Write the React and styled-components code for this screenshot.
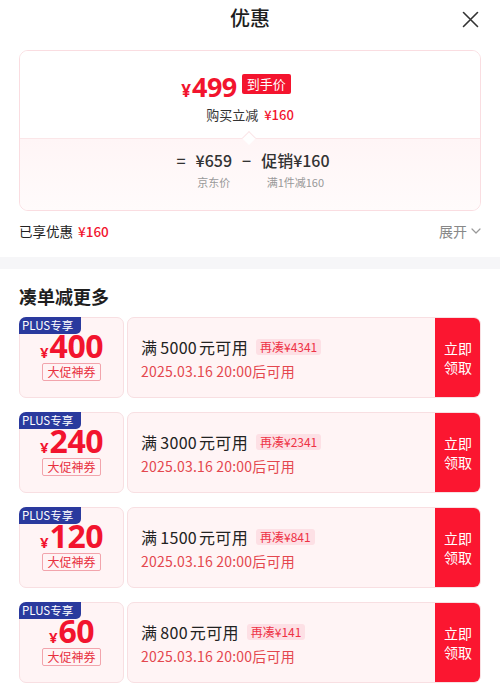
import React from "react";
import styled, { createGlobalStyle } from "styled-components";

const Global = createGlobalStyle`
  html, body { margin: 0; padding: 0; background: #fff; }
  body { font-family: "Noto Sans CJK SC", "Noto Sans", sans-serif; color: #222; }
  * { box-sizing: border-box; }
`;

const Page = styled.div`
  width: 500px;
  min-height: 698px;
  background: #fff;
`;

const Header = styled.div`
  height: 38px;
  display: flex;
  align-items: center;
  justify-content: center;
  position: relative;
`;

const Title = styled.div`
  font-size: 20px;
  font-weight: 500;
  color: #1e1e1e;
  line-height: 1;
  margin-top: -2px;
`;

const Close = styled.button`
  position: absolute;
  right: 20px;
  top: 9px;
  width: 20px;
  height: 20px;
  border: 0;
  padding: 0;
  background: transparent;
  display: flex;
  align-items: center;
  justify-content: center;
`;

const Card = styled.div`
  margin: 12px 19px 0;
  border: 1px solid #fadde1;
  border-radius: 9px;
  overflow: hidden;
`;

const CardTop = styled.div`
  height: 88px;
  padding-top: 20px;
  display: flex;
  flex-direction: column;
  align-items: center;
  position: relative;
  background: #fff;
  border-bottom: 1px solid #fbe6e8;
  &::after {
    content: "";
    position: absolute;
    left: 224px;
    bottom: -5px;
    width: 9px;
    height: 9px;
    background: #fff;
    border-left: 1px solid #fbe6e8;
    border-top: 1px solid #fbe6e8;
    transform: rotate(45deg);
  }
`;

const PriceRow = styled.div`
  display: flex;
  align-items: center;
  height: 30px;
  gap: 5px;
  margin-right: 28px;
`;

const BigPrice = styled.div`
  color: #f2142e;
  font-weight: 700;
  display: flex;
  align-items: baseline;
  line-height: 1;
  font-family: "Open Sans", "Noto Sans CJK SC", sans-serif;
`;

const Yen = styled.span`
  font-size: ${p => p.$size || 16}px;
  line-height: ${p => p.$size || 16}px;
  font-weight: 700;
  margin-right: 1px;
`;

const Digits = styled.span`
  font-size: ${p => p.$size || 29}px;
  line-height: ${p => p.$lh || p.$size || 29}px;
  letter-spacing: -0.5px;
`;

const Badge = styled.span`
  background: #f4142e;
  color: #fff;
  font-size: 13px;
  line-height: 20px;
  height: 20px;
  padding: 0 5px;
  border-radius: 2px;
  margin-top: -4px;
`;

const SubLine = styled.div`
  margin-top: 4px;
  font-size: 13px;
  color: #333;
  line-height: 20px;
  display: flex;
  gap: 6px;
`;

const RedText = styled.span`
  color: #f2142e;
  font-weight: ${p => (p.$bold ? 500 : 400)};
`;

const CardBottom = styled.div`
  height: 71px;
  padding-top: 10px;
  background: linear-gradient(180deg, #fff5f6 0%, #fffbfb 100%);
  display: flex;
  justify-content: center;
  gap: 10px;
  padding-left: 6px;
`;

const Formula = styled.div`
  display: flex;
  flex-direction: column;
  align-items: center;
`;

const FVal = styled.div`
  font-size: 16px;
  line-height: 22px;
  color: #333;
  font-weight: 500;
  white-space: nowrap;
`;

const FLabel = styled.div`
  font-size: 11px;
  line-height: 16px;
  color: #999;
  margin-top: 3px;
  white-space: nowrap;
`;

const EnjoyRow = styled.div`
  display: flex;
  justify-content: space-between;
  align-items: center;
  height: 24px;
  margin: 8px 19px 0;
  font-size: 13.5px;
`;

const EnjoyLeft = styled.div`
  color: #222;
  display: flex;
  gap: 5px;
`;

const Expand = styled.div`
  color: #888;
  font-size: 14px;
  display: flex;
  align-items: center;
  gap: 4px;
`;

const Band = styled.div`
  height: 12px;
  background: #f6f6f8;
  margin-top: 14px;
`;

const Section = styled.div`
  padding: 15px 19px 0;
`;

const SectionTitle = styled.div`
  font-size: 18px;
  font-weight: 700;
  color: #1e1e1e;
  line-height: 24px;
`;

const List = styled.div`
  margin-top: 9px;
  display: flex;
  flex-direction: column;
  gap: 14px;
`;

const Coupon = styled.div`
  display: flex;
  height: 81px;
  gap: 3px;
`;

const Stub = styled.div`
  width: 105px;
  flex: none;
  position: relative;
  background: #fff4f5;
  border: 1px solid #f8dfe2;
  border-radius: 7px;
  display: flex;
  flex-direction: column;
  align-items: center;
  padding-top: 16px;
`;

const Plus = styled.div`
  position: absolute;
  left: -1px;
  top: -1px;
  width: 62px;
  height: 17px;
  background: #2a3a9e;
  color: #fff;
  font-size: 11.5px;
  line-height: 17px;
  padding-left: 3px;
  border-radius: 7px 0 5px 0;
  white-space: nowrap;
`;

const StubPrice = styled.div`
  color: #f2142e;
  font-weight: 700;
  display: flex;
  align-items: baseline;
  height: 28px;
  font-family: "Noto Sans", "Noto Sans CJK SC", sans-serif;
`;

const StubTag = styled.div`
  margin-top: 1px;
  border: 1px solid #f2a4ac;
  border-radius: 2px;
  color: #e8303f;
  font-size: 12px;
  line-height: 16px;
  padding: 0 4px;
`;

const Main = styled.div`
  flex: 1;
  background: #fff4f5;
  border: 1px solid #f8dfe2;
  border-radius: 7px;
  display: flex;
  overflow: hidden;
`;

const Info = styled.div`
  flex: 1;
  padding: 17px 0 0 13px;
`;

const CondRow = styled.div`
  display: flex;
  align-items: center;
  height: 24px;
`;

const Cond = styled.span`
  font-size: 16px;
  color: #222;
  letter-spacing: 0.3px;
`;

const Gap = styled.span`
  margin-left: ${p => p.$w}px;
`;

const More = styled.span`
  margin-left: 8px;
  background: #fde0e5;
  color: #ee3245;
  font-size: 12px;
  line-height: 16px;
  padding: 0 4px;
  border-radius: 3px;
`;

const DateLine = styled.div`
  margin-top: 2px;
  font-size: 14px;
  color: #e4474e;
  line-height: 20px;
  letter-spacing: 0.2px;
`;

const Grab = styled.button`
  width: 46px;
  flex: none;
  border: 0;
  margin: -1px -1px -1px 0;
  background: #fb1630;
  color: #fff;
  font-family: inherit;
  font-size: 14px;
  line-height: 19px;
  padding: 0;
  display: flex;
  align-items: center;
  justify-content: center;
  text-align: center;
`;

const coupons = [
  { amt: "400", need: "5000", more: "4341" },
  { amt: "240", need: "3000", more: "2341" },
  { amt: "120", need: "1500", more: "841" },
  { amt: "60", need: "800", more: "141" },
];

export default function App() {
  return (
    <Page>
      <Global />
      <Header>
        <Title>优惠</Title>
        <Close aria-label="关闭">
          <svg width="17" height="17" viewBox="0 0 17 17">
            <path d="M1.5 1.5 L15.5 15.5 M15.5 1.5 L1.5 15.5" stroke="#333" strokeWidth="1.6" strokeLinecap="round" />
          </svg>
        </Close>
      </Header>

      <Card>
        <CardTop>
          <PriceRow>
            <BigPrice>
              <Yen $size={17}>¥</Yen>
              <Digits $size={27}>499</Digits>
            </BigPrice>
            <Badge>到手价</Badge>
          </PriceRow>
          <SubLine>
            <span>购买立减</span>
            <RedText $bold>¥160</RedText>
          </SubLine>
        </CardTop>
        <CardBottom>
          <Formula><FVal>=</FVal></Formula>
          <Formula>
            <FVal>¥659</FVal>
            <FLabel>京东价</FLabel>
          </Formula>
          <Formula><FVal>−</FVal></Formula>
          <Formula>
            <FVal>促销¥160</FVal>
            <FLabel>满1件减160</FLabel>
          </Formula>
        </CardBottom>
      </Card>

      <EnjoyRow>
        <EnjoyLeft>
          <span>已享优惠</span>
          <RedText $bold>¥160</RedText>
        </EnjoyLeft>
        <Expand>
          <span>展开</span>
          <svg width="10" height="6" viewBox="0 0 10 6">
            <path d="M1 1 L5 5 L9 1" fill="none" stroke="#999" strokeWidth="1.2" strokeLinecap="round" strokeLinejoin="round" />
          </svg>
        </Expand>
      </EnjoyRow>

      <Band />

      <Section>
        <SectionTitle>凑单减更多</SectionTitle>
        <List>
          {coupons.map(c => (
            <Coupon key={c.amt}>
              <Stub>
                <Plus>PLUS专享</Plus>
                <StubPrice>
                  <Yen $size={15}>¥</Yen>
                  <Digits $size={32} $lh={24}>{c.amt}</Digits>
                </StubPrice>
                <StubTag>大促神券</StubTag>
              </Stub>
              <Main>
                <Info>
                  <CondRow>
                    <Cond>满<Gap $w={3} />{c.need}<Gap $w={2} />元可用</Cond>
                    <More>再凑¥{c.more}</More>
                  </CondRow>
                  <DateLine>2025.03.16 20:00后可用</DateLine>
                </Info>
                <Grab>立即<br />领取</Grab>
              </Main>
            </Coupon>
          ))}
        </List>
      </Section>
    </Page>
  );
}
